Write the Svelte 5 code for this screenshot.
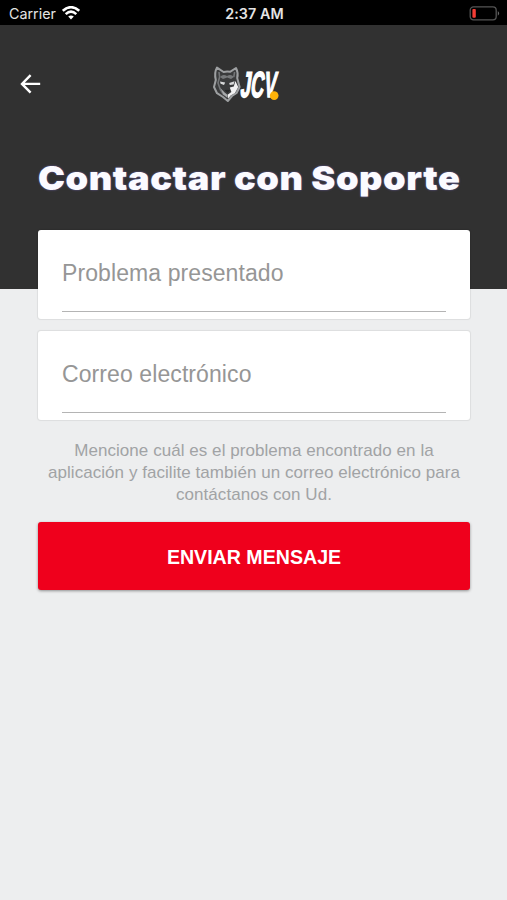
<script>
  const fields = [
    { id: 'problem', label: 'Problema presentado' },
    { id: 'email', label: 'Correo electrónico' }
  ];
</script>

<div class="screen">
  <div class="status">
    <div class="carrier">
      <span>Carrier</span>
      <svg width="18" height="14" viewBox="0 0 18 14">
        <g fill="none" stroke="#fff" stroke-width="2.6">
          <path d="M.8 4.9Q9-2.5 17.2 4.9" />
          <path d="M3.7 8.1Q9 3.3 14.3 8.1" />
        </g>
        <path d="M6.2 10.6Q9 8.3 11.8 10.6L9 13.6Z" fill="#fff" />
      </svg>
    </div>
    <span class="time">2:37 AM</span>
    <svg class="battery" width="32" height="15" viewBox="0 0 32 15">
      <rect x="1.2" y=".9" width="26" height="13" rx="3.3" fill="none" stroke="#555" stroke-width="1.3" />
      <rect x="3.4" y="3" width="3.4" height="8.8" rx="1" fill="#f53d35" />
      <path d="M28.8 5Q31.6 7.4 28.8 9.8Z" fill="#666" />
    </svg>
  </div>

  <header>
    <div class="nav">
      <button class="back" aria-label="Volver">
        <svg width="22" height="22" viewBox="0 0 22 22">
          <path d="M11.6 2.2L3 10.9L11.6 19.6M3.4 10.9H21.2" fill="none" stroke="#fff" stroke-width="2.4" />
        </svg>
      </button>
      <svg class="logo" width="84" height="42" viewBox="0 0 84 42">
        <path d="M6 4.6L12.6 9Q16 8 19 8.8L25 5Q27.6 10 26.2 15L28.6 24L25.6 30L21 33L16.8 38L12 34L6 30.2L3 24L4.8 17Q3 10 6 4.6Z" fill="#3a3b3c" stroke="#9d9fa1" stroke-width="2" stroke-linejoin="round" />
        <path d="M8 9L8.6 14L7 20L9.5 27L13 32M23.6 9L22.8 14" fill="none" stroke="#737577" stroke-width="1.6" />
        <path d="M9 14Q12 10.6 16 13Q20 10.6 23 14L20 16L16.2 14.6L12 16Z" fill="#77797b" />
        <path d="M9 18.4L14.2 19.6L13 22L9.6 20.8ZM18.2 20L23.6 18.2L22.6 21.4L18.8 22Z" fill="#d8d9da" />
        <path d="M24.4 18L27.2 24L24 30L19.6 32.4L17.2 35.6L16.6 31.8L20.4 29L18.8 24.6L22.8 23.4Z" fill="#f1f1f2" />
        <path d="M9.4 25L13.6 29.6L16.4 31.8L16.6 35L12.4 31.8Z" fill="#a8aaac" />
        <path d="M14.2 27.4H18.6L16.6 29.4Z" fill="#252728" stroke="#252728" />
        <text transform="translate(28.8 34) skewX(-8)" x="0" y="0" textLength="35.2" lengthAdjust="spacingAndGlyphs">JCV</text>
        <circle cx="63.2" cy="32.6" r="4.3" fill="#fdb309" />
      </svg>
    </div>
    <h1>Contactar con Soporte</h1>
  </header>

  <main>
    {#each fields as field (field.id)}
      <div class="card">
        <div class="field"><span>{field.label}</span></div>
      </div>
    {/each}
    <p>
      Mencione cuál es el problema encontrado en la<br />
      aplicación y facilite también un correo electrónico para<br />
      contáctanos con Ud.
    </p>
    <button class="send">ENVIAR MENSAJE</button>
  </main>
</div>

<style>
  :global(body) { margin: 0; background: #edeeef; }
  .screen {
    width: 507px;
    height: 900px;
    overflow: hidden;
    background: #edeeef;
    font-family: "Liberation Sans", Arial, sans-serif;
  }
  .status {
    height: 25px;
    box-sizing: border-box;
    padding: 2px 7px 0 9px;
    background: #000;
    color: #e4e4e4;
    display: grid;
    grid-template-columns: 1fr auto 1fr;
    align-items: center;
    font: 14.3px/23px Inter, sans-serif;
  }
  .carrier { display: flex; align-items: center; gap: 6px; }
  .carrier svg { margin-top: -2px; }
  .time { font-weight: 600; letter-spacing: 0.1px; }
  .battery { justify-self: end; margin: -1px -1px 0 0; }
  svg { display: block; }
  button { border: 0; padding: 0; margin: 0; font: inherit; }
  header { height: 264px; background: #313131; }
  .nav {
    height: 118px;
    display: grid;
    grid-template-columns: 211px 84px 1fr;
    align-items: center;
  }
  .back { width: 22px; height: 22px; margin-left: 19px; background: none; }
  .logo { overflow: visible; }
  .logo text {
    fill: #fff;
    stroke: #fff;
    stroke-width: 1.6;
    font: 700 36px "Liberation Sans", Arial, sans-serif;
  }
  h1 {
    width: max-content;
    margin: 14px 0 0 38px;
    color: #fbfaff;
    font: 900 33px/42px Inter, sans-serif;
    letter-spacing: 0.5px;
    white-space: nowrap;
    text-shadow: 0 0 2px #6e61aa;
    transform: scaleX(1.097);
    transform-origin: left center;
  }
  main {
    position: relative;
    margin: -59px 37px 0 38px;
    display: flex;
    flex-direction: column;
  }
  .card {
    height: 89px;
    box-sizing: border-box;
    margin-bottom: 12px;
    padding: 24px 24px 0;
    background: #fff;
    border-radius: 3px;
    box-shadow: 0 0 1px 1px rgba(0, 0, 0, 0.07);
  }
  .field {
    height: 58px;
    box-sizing: border-box;
    border-bottom: 1.5px solid #b4b4b4;
    color: #969696;
    font-size: 23px;
    line-height: 38px;
    letter-spacing: 0.09px;
    white-space: nowrap;
  }
  p {
    margin: 8px 0 0;
    height: 66px;
    color: #a1a3a5;
    text-align: center;
    font-size: 17px;
    letter-spacing: 0.05px;
    line-height: 22px;
    white-space: nowrap;
  }
  .send {
    height: 68px;
    margin-top: 16px;
    padding-top: 2px;
    border-radius: 3px;
    background: #ef001c;
    color: #fff;
    font-size: 19.6px;
    font-weight: 700;
    box-shadow: 0 1px 3px rgba(0, 0, 0, 0.4);
  }
</style>
